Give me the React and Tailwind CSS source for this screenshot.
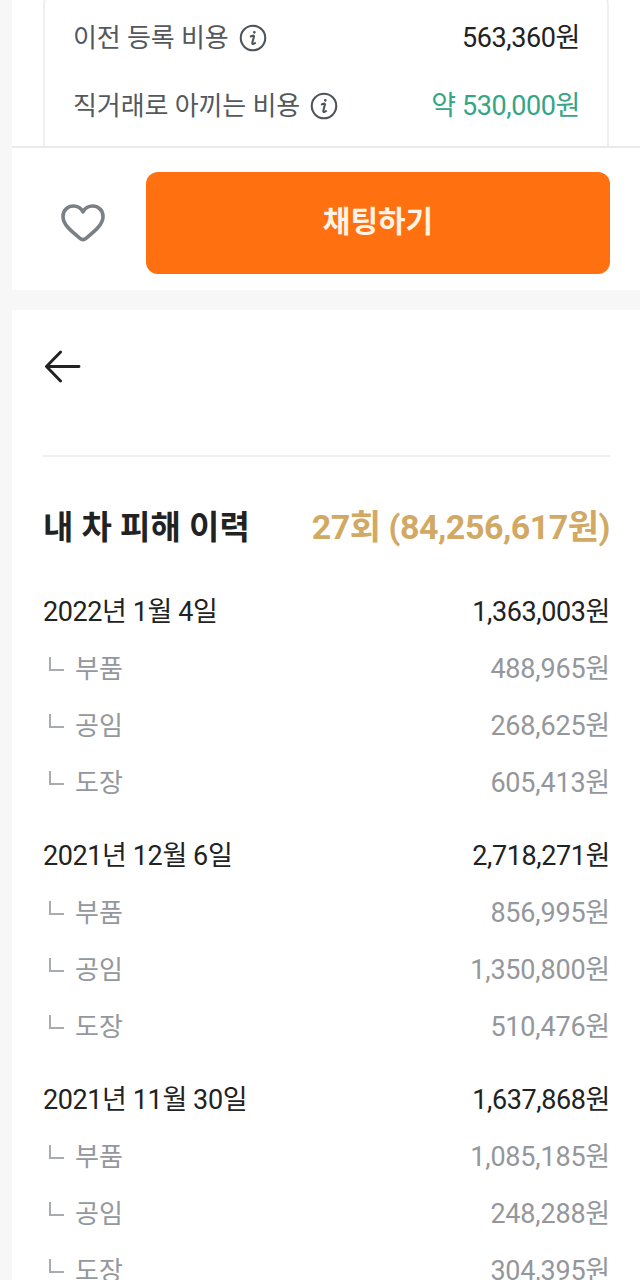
import React from "react";

const historyGroups = [
  {
    date: "2022년 1월 4일",
    total: "1,363,003원",
    items: [
      ["부품", "488,965원"],
      ["공임", "268,625원"],
      ["도장", "605,413원"],
    ],
  },
  {
    date: "2021년 12월 6일",
    total: "2,718,271원",
    items: [
      ["부품", "856,995원"],
      ["공임", "1,350,800원"],
      ["도장", "510,476원"],
    ],
  },
  {
    date: "2021년 11월 30일",
    total: "1,637,868원",
    items: [
      ["부품", "1,085,185원"],
      ["공임", "248,288원"],
      ["도장", "304,395원"],
    ],
  },
];

const InfoIcon = () => (
  <svg width="28" height="28" viewBox="0 0 27 27" fill="none" stroke="#4f5458" strokeWidth="2" strokeLinecap="round">
    <circle cx="13.5" cy="13.5" r="11.8" />
    <circle cx="14.8" cy="8" r="0.7" fill="#4f5458" strokeWidth="1.2" />
    <path d="M11.4 12c1.1-.7 2.9-1.2 3-.2.1.8-1.6 5.6-1.6 6.8 0 1.1 1.4.9 2.7-.2" />
  </svg>
);

const CostRow = ({ label, value, valueClass }) => (
  <div className="flex h-[68px] items-center justify-between">
    <div className="flex items-center gap-[10px]">
      <span className="text-[26px] leading-[34px] tracking-[-0.1px] text-[#54585c]">{label}</span>
      <InfoIcon />
    </div>
    <span className={`text-[27px] leading-[34px] tracking-[-0.4px] ${valueClass}`}>{value}</span>
  </div>
);

const HistoryGroup = ({ group }) => (
  <div className="mb-[16px]">
    <div className="flex h-[57px] items-center justify-between text-[27px] tracking-[-0.4px] text-[#222222]">
      <span>{group.date}</span>
      <span>{group.total}</span>
    </div>
    {group.items.map(([name, price]) => (
      <div key={name} className="flex h-[57px] items-center justify-between text-[#94979c]">
        <div className="flex items-center">
          <span className="mb-[12px] ml-[6px] mr-[11px] h-[14px] w-[15px] border-b-2 border-l-2 border-[#a9acaf]" />
          <span className="text-[26px]">{name}</span>
        </div>
        <span className="text-[27px] tracking-[-0.2px]">{price}</span>
      </div>
    ))}
  </div>
);

export default function App() {
  return (
    <div className="h-[1280px] overflow-hidden bg-[#f7f7f7] pl-[12px] font-['Roboto','Noto_Sans_CJK_KR',sans-serif]">
      <section className="h-[290px] bg-white">
        <div className="h-[148px] overflow-hidden border-b-2 border-[#e9eaeb] pl-[31px] pr-[31px]">
          <div className="-mt-[14px] h-[200px] rounded-[20px] border-2 border-[#eeeff0] pl-[28px] pr-[27px] pt-[16px]">
            <CostRow label="이전 등록 비용" value="563,360원" valueClass="text-[#222222]" />
            <CostRow label="직거래로 아끼는 비용" value="약 530,000원" valueClass="text-[#35a585]" />
          </div>
        </div>
        <div className="flex items-start pt-[24px]">
          <button type="button" className="flex h-[102px] w-[134px] items-center justify-center">
            <svg width="44" height="38" viewBox="0 0 44 38" fill="none" stroke="#7b8085" strokeWidth="3.6" strokeLinejoin="round" className="ml-[7px]">
              <path d="M22 35.6 C20.6 35.6 19.6 34.8 18.4 33.8 C10 27 2 20.4 2 12.4 C2 6.2 6.8 2 12.4 2 C16.4 2 20 4 22 7.8 C24 4 27.6 2 31.6 2 C37.2 2 42 6.2 42 12.4 C42 20.4 34 27 25.6 33.8 C24.4 34.8 23.4 35.6 22 35.6 Z" />
            </svg>
          </button>
          <button type="button" className="flex h-[102px] w-[464px] items-center justify-center rounded-[12px] bg-[#ff7010] pb-[4px] text-[30px] font-bold text-[#fff3e6]">
            채팅하기
          </button>
        </div>
      </section>

      <section className="mt-[20px] bg-white pl-[31px] pr-[30px]">
        <div className="h-[147px] border-b-2 border-[#f0f0f0] pt-[40px]">
          <svg width="37" height="33" viewBox="0 0 38 34" fill="none" stroke="#222222" strokeWidth="3" strokeLinecap="round" strokeLinejoin="round" className="ml-[1px]">
            <path d="M36 17H2.5M17 2 2.5 17 17 32" />
          </svg>
        </div>
        <div className="flex h-[127px] items-center justify-between pt-[14px]">
          <h2 className="text-[33px] font-bold text-[#222222]">내 차 피해 이력</h2>
          <span className="text-[34px] font-bold tracking-[-0.5px] text-[#d1a964]">27회 (84,256,617원)</span>
        </div>
        {historyGroups.map((group) => (
          <HistoryGroup key={group.date} group={group} />
        ))}
      </section>
    </div>
  );
}
